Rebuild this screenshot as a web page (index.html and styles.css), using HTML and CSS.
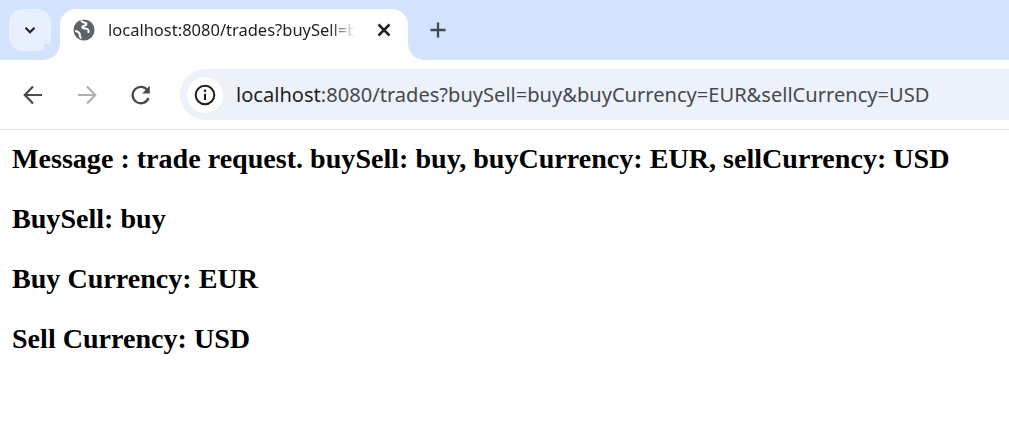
FILE: index.html
```html
<!DOCTYPE html>
<html lang="en">
<head>
<meta charset="utf-8">
<title>localhost:8080/trades</title>
<link rel="stylesheet" href="styles.css">
</head>
<body>
<header class="browser">
  <div class="strip">
    <div class="tab-search">
      <svg width="18" height="18" viewBox="0 0 18 18"><path d="M4.500 6.800 9 11.200l4.500-4.400" fill="none" stroke="#1f2329" stroke-width="2.200"/></svg>
    </div>
    <div class="tab">
      <svg class="globe" width="22" height="22" viewBox="0 0 22 22"><circle cx="11" cy="11" r="10.500" fill="#5f6368"/><path d="M8 1.500c1 1.600 3 2.200 4.600 2.400 1 .2 1 1.400.3 2.100-.9.900-2.600.5-3.400 1.500-.6.800.3 1.600 1.300 1.800 1.600.3 3.200.1 4.300 1.300.8.900.6 2.100.1 3.200" fill="none" stroke="#fff" stroke-width="2"/><path d="M2 12c1.700.200 3.400.800 4.300 2.100.7 1 .3 2.100.7 3.200.2.700.7 1.500 1.300 2.200" fill="none" stroke="#fff" stroke-width="2"/></svg>
      <span class="tab-title">localhost:8080/trades?buySell=buy&amp;buyCurrency=EUR</span>
      <svg class="close" width="16" height="16" viewBox="0 0 16 16"><path d="M2.500 2.500l11 11M13.500 2.500l-11 11" stroke="#202124" stroke-width="2.500"/></svg>
    </div>
    <svg class="new-tab" width="18" height="18" viewBox="0 0 18 18"><path d="M9 1.500v15M1.500 9h15" stroke="#43474e" stroke-width="2.300"/></svg>
  </div>
  <div class="toolbar">
    <div class="nav">
      <svg width="24" height="24" viewBox="0 0 24 24"><path d="M21 12H4.500M12 3.500 3.800 12l8.200 8.500" fill="none" stroke="#474a4f" stroke-width="2.200"/></svg>
      <svg width="24" height="24" viewBox="0 0 24 24"><path d="M3 12h16.500M12 3.500l8.200 8.500-8.200 8.500" fill="none" stroke="#aeb0b3" stroke-width="2.200"/></svg>
      <svg width="24" height="24" viewBox="0 0 24 24"><path d="M19.500 15a8.200 8.200 0 1 1-.8-7.500" fill="none" stroke="#474a4f" stroke-width="2.300"/><path d="M20.800 2.800v7.600h-7.600z" fill="#474a4f"/></svg>
    </div>
    <div class="omnibox">
      <div class="site-info">
        <svg width="22" height="22" viewBox="0 0 22 22"><circle cx="11" cy="11" r="9.300" fill="none" stroke="#1f1f1f" stroke-width="2"/><path d="M11 9.800v6.200" stroke="#1f1f1f" stroke-width="2"/><circle cx="11" cy="6.800" r="1.300" fill="#1f1f1f"/></svg>
      </div>
      <span class="url"><span class="host">localhost</span>:8080/trades?buySell=buy&amp;buyCurrency=EUR&amp;sellCurrency=USD</span>
    </div>
  </div>
</header>
<main class="content">
  <h2 class="line">Message : trade request. buySell: buy, buyCurrency: EUR, sellCurrency: USD</h2>
  <h2 class="line">BuySell: buy</h2>
  <h2 class="line">Buy Currency: EUR</h2>
  <h2 class="line">Sell Currency: USD</h2>
</main>
</body>
</html>
```
FILE: styles.css
```css
* { box-sizing: border-box; }
html, body { margin: 0; padding: 0; background: #fff; overflow: hidden; }
body { width: 1009px; height: 430px; }
.browser { font-family: "Noto Sans", "Open Sans", sans-serif; }
.strip { height: 60px; background: #d3e3fd; display: flex; align-items: flex-start; padding: 9px 0 0 9px; }
.tab-search { width: 42px; height: 42px; border-radius: 14px; background: #e9f0fd; display: flex; align-items: center; justify-content: center; flex: none; }
.tab { position: relative; margin-left: 9px; width: 348px; height: 51px; background: #fff; border-radius: 16px 16px 0 0; display: flex; align-items: center; padding: 0 16px 9px 13px; flex: none; }
.tab::before, .tab::after { content: ""; position: absolute; bottom: 0; width: 16px; height: 16px; }
.tab::before { left: -16px; background: radial-gradient(circle at 0 0, #d3e3fd 15.500px, #fff 16px); }
.tab::after { right: -16px; background: radial-gradient(circle at 100% 0, #d3e3fd 15.500px, #fff 16px); }
.globe { flex: none; }
.tab-title { margin-left: 13px; width: 252px; font-size: 16.500px; line-height: 22px; color: #1f1f1f; white-space: nowrap; overflow: hidden; -webkit-mask-image: linear-gradient(90deg, #000 88%, transparent 98%); mask-image: linear-gradient(90deg, #000 88%, transparent 98%); flex: none; }
.close { margin-left: 16px; flex: none; }
.new-tab { margin: 12px 0 0 21px; flex: none; }
.toolbar { position: relative; height: 70px; background: #fff; border-bottom: 1px solid #e1e3e6; border-radius: 16px 0 0 0; display: flex; align-items: center; padding-left: 21px; }
.nav { display: flex; gap: 30px; align-items: center; flex: none; }
.omnibox { margin-left: 27px; flex: 1; height: 51px; background: #ecf1fa; border-radius: 25.500px 0 0 25.500px; display: flex; align-items: center; padding-left: 7px; }
.site-info { width: 36px; height: 36px; border-radius: 50%; background: #fff; display: flex; align-items: center; justify-content: center; flex: none; }
.url { margin-left: 13px; font-size: 20.080px; color: #444950; white-space: nowrap; }
.host { color: #1f1f1f; }
.content { margin-top: -1px; padding: 0 12px; }
.line { margin: 0; font-family: "Liberation Serif", "Times New Roman", serif; font-size: 28.080px; font-weight: 700; line-height: 60px; height: 60px; color: #000; white-space: nowrap; }
```
